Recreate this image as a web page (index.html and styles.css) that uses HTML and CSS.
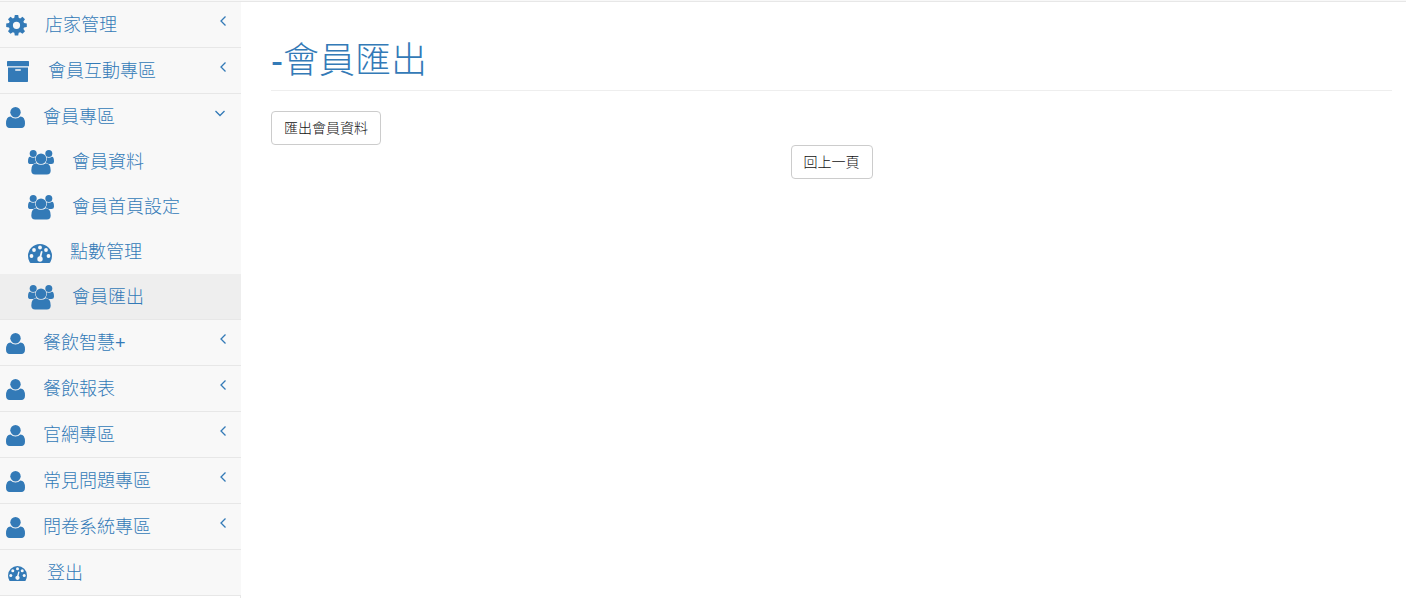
FILE: index.html
```html
<!DOCTYPE html>
<html lang="zh-Hant">
<head>
<meta charset="utf-8">
<meta name="viewport" content="width=device-width, initial-scale=1">
<title>會員匯出</title>
<link rel="stylesheet" href="styles.css">
</head>
<body>
<svg class="sprite" aria-hidden="true">
  <symbol id="gear" viewBox="0 0 21 22"><path fill-rule="evenodd" d="M8.800 1h3.400l.5 2.800 1.500.6 2.300-1.600 2.500 2.500-1.600 2.300.6 1.500 2.800.5V13l-2.800.5-.6 1.500 1.600 2.300-2.500 2.500-2.300-1.600-1.500.6-.5 2.800H8.800l-.5-2.800-1.500-.6-2.300 1.600L2 17.300l1.600-2.300-.6-1.500L.2 13V9.600L3 9.100l.6-1.500L2 5.300l2.500-2.500 2.300 1.600 1.500-.6zM10.500 7.700a3.600 3.600 0 1 0 0 7.200 3.600 3.600 0 0 0 0-7.200z"/></symbol>
  <symbol id="archive" viewBox="-1 -1 24 22"><path fill-rule="evenodd" d="M.7 0h20.600q.7 0 .7.700v4q0 .6-.7.600H.7Q0 5.300 0 4.700v-4Q0 0 .7 0zM1 6.500h20v13.800q0 .7-.7.700H1.700q-.7 0-.7-.7zM8.800 8.200a.8.800 0 0 0 0 1.600h4.400a.8.800 0 0 0 0-1.600z"/></symbol>
  <symbol id="user" viewBox="0 0 19 22"><ellipse cx="9.500" cy="6.300" rx="5.200" ry="5.300"/><path d="M4.600 10.500Q6.600 12.600 9.500 12.600T14.400 10.500Q19 10.700 19 17.600 19 22 15.400 22H3.600Q0 22 0 17.600 0 10.700 4.600 10.500z"/></symbol>
  <symbol id="users" viewBox="0 0 26 26"><circle cx="5.200" cy="4.500" r="3.500"/><circle cx="20.800" cy="4.500" r="3.500"/><circle cx="13" cy="9.700" r="5.300"/><path d="M2 7.700q2.700 1.700 5.200.6-.5 3.400 1.200 5.500-1.800 0-3 1.200H2.600Q0 15 0 12.700 0 7.700 2 7.700zM24 7.700q-2.700 1.700-5.200.6.500 3.400-1.200 5.500 1.800 0 3 1.200h2.800q2.600 0 2.600-2.300 0-5-2-5zM8.200 14.300q2 1.500 4.800 1.500t4.800-1.500q4.900.2 4.900 7.100 0 4-3.800 4H7.100q-3.800 0-3.800-4 0-6.900 4.900-7.100z"/></symbol>
  <symbol id="gauge" viewBox="0 0 24 19"><path d="M12 0a12 12 0 0 1 12 12q0 3.500-1.700 6.300-.4.700-1 .7H2.700q-.6 0-1-.7Q0 15.500 0 12A12 12 0 0 1 12 0z"/><g class="cutout"><circle cx="3.500" cy="12" r="1.900"/><circle cx="6" cy="6" r="1.900"/><circle cx="12" cy="3.500" r="1.900"/><circle cx="18" cy="6" r="1.900"/><circle cx="20.500" cy="12" r="1.900"/><circle cx="12" cy="15" r="2.700"/><path d="m13 7 1.600.4-1.600 6.700-1.800-.4z"/></g></symbol>
  <symbol id="left" viewBox="0 0 12 12"><path class="line" d="M8.500 1.500 4 6l4.500 4.500"/></symbol>
  <symbol id="down" viewBox="0 0 12 12"><path class="line" d="M1.500 4 6 8.500 10.500 4"/></symbol>
</svg>
<header class="topbar"></header>
<div class="layout">
  <aside class="sidebar">
    <nav aria-label="主選單">
      <ul class="menu">
        <li class="group"><a class="item" href="#"><svg class="icon gear"><use href="#gear"/></svg><span>店家管理</span><svg class="arrow"><use href="#left"/></svg></a></li>
        <li class="group"><a class="item" href="#"><svg class="icon archive"><use href="#archive"/></svg><span>會員互動專區</span><svg class="arrow"><use href="#left"/></svg></a></li>
        <li class="group"><a class="item" href="#" aria-expanded="true"><svg class="icon user"><use href="#user"/></svg><span>會員專區</span><svg class="arrow open"><use href="#down"/></svg></a>
          <ul class="menu submenu">
            <li><a class="item" href="#"><svg class="icon users"><use href="#users"/></svg><span>會員資料</span></a></li>
            <li><a class="item" href="#"><svg class="icon users"><use href="#users"/></svg><span>會員首頁設定</span></a></li>
            <li><a class="item" href="#"><svg class="icon gauge"><use href="#gauge"/></svg><span>點數管理</span></a></li>
            <li><a class="item active" href="#" aria-current="page"><svg class="icon users"><use href="#users"/></svg><span>會員匯出</span></a></li>
          </ul>
        </li>
        <li class="group"><a class="item" href="#"><svg class="icon user"><use href="#user"/></svg><span>餐飲智慧+</span><svg class="arrow"><use href="#left"/></svg></a></li>
        <li class="group"><a class="item" href="#"><svg class="icon user"><use href="#user"/></svg><span>餐飲報表</span><svg class="arrow"><use href="#left"/></svg></a></li>
        <li class="group"><a class="item" href="#"><svg class="icon user"><use href="#user"/></svg><span>官網專區</span><svg class="arrow"><use href="#left"/></svg></a></li>
        <li class="group"><a class="item" href="#"><svg class="icon user"><use href="#user"/></svg><span>常見問題專區</span><svg class="arrow"><use href="#left"/></svg></a></li>
        <li class="group"><a class="item" href="#"><svg class="icon user"><use href="#user"/></svg><span>問卷系統專區</span><svg class="arrow"><use href="#left"/></svg></a></li>
        <li class="group"><a class="item logout" href="#"><svg class="icon gauge-small"><use href="#gauge"/></svg><span>登出</span></a></li>
      </ul>
    </nav>
  </aside>
  <main class="content">
    <h1 class="title">-會員匯出</h1>
    <button class="button" type="button">匯出會員資料</button>
    <div class="back"><button class="button" type="button">回上一頁</button></div>
  </main>
</div>
</body>
</html>
```
FILE: styles.css
```css
* { box-sizing: border-box; }

body {
  display: flex;
  flex-direction: column;
  min-height: 100vh;
  margin: 0;
  background: #fff;
  color: #222;
  font: 300 14px/20px "Liberation Sans", "Noto Sans CJK TC", sans-serif;
}

.sprite { display: none; }

.topbar {
  height: 2px;
  background: #f8f8f8;
  border-bottom: 1px solid #e7e7e7;
}

.layout {
  display: grid;
  flex: 1;
  grid-template-columns: 241px 1fr;
}

.sidebar { box-shadow: inset -1px 0 #e7e7e7; }

.menu {
  margin: 0;
  padding: 0;
  list-style: none;
  background: #f8f8f8;
}

.group { border-bottom: 1px solid #e7e7e7; }

.item {
  display: flex;
  align-items: center;
  gap: 18px;
  height: 45px;
  padding: 0 12px 0 6px;
  color: #337ab7;
  font-size: 18px;
  line-height: 24px;
  text-decoration: none;
}

.item:hover, .item.active { background: #eee; }
.submenu .item { padding-left: 28px; }
.item.logout { padding-left: 8px; gap: 20px; }

.icon { flex: none; fill: #337ab7; }
.gear { width: 21px; height: 22px; }
.archive { width: 24px; height: 22px; }
.user { width: 19px; height: 22px; }
.users { width: 26px; height: 26px; }
.gauge { width: 24px; height: 19px; margin-top: 4px; }
.gauge-small { width: 19px; height: 15px; margin-top: 2px; }
.cutout { fill: #f8f8f8; }

.arrow {
  width: 12px;
  height: 12px;
  margin: 0 0 8px auto;
}
.arrow.open { margin-right: 3px; }
.line { fill: none; stroke: #337ab7; stroke-width: 1.3; }

.content { padding: 39px 14px 0 30px; }

.title {
  margin: 0 0 20px;
  padding-bottom: 9px;
  border-bottom: 1px solid #eee;
  color: #337ab7;
  font-size: 36px;
  font-weight: 300;
  line-height: 40px;
}

.button {
  display: block;
  height: 34px;
  padding: 0 12px;
  border: 1px solid #ccc;
  border-radius: 4px;
  background: #fff;
  color: #111;
  font: inherit;
  cursor: pointer;
}

.back { display: flex; justify-content: center; }
```
